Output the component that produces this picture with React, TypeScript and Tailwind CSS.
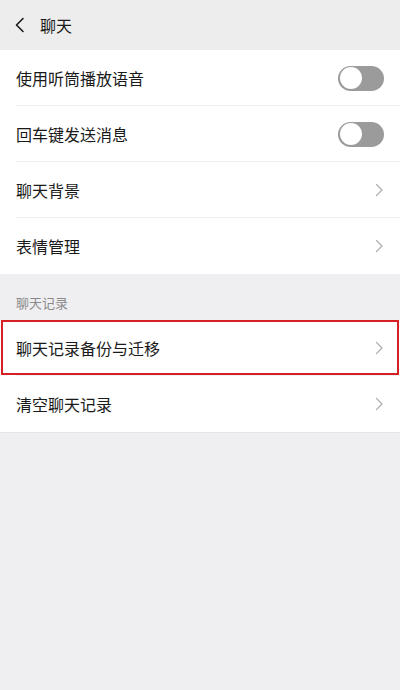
import React from "react";

const font = { fontFamily: '"Noto Sans CJK SC", "Noto Sans", sans-serif' };

function Chevron() {
  return (
    <svg width="9" height="14" viewBox="0 0 9 14" fill="none">
      <path d="M1.5 1.5 L7 7 L1.5 12.5" stroke="#b2b2b2" strokeWidth="1.4" strokeLinecap="round" strokeLinejoin="round" />
    </svg>
  );
}

function Toggle() {
  return (
    <div className="w-[46px] h-[25px] rounded-full bg-[#9b9b9b] flex items-center p-[1.5px]">
      <div className="w-[22px] h-[22px] rounded-full bg-white" />
    </div>
  );
}

function Row({ label, right, divider = true, highlight = false }: { label: string; right: React.ReactNode; divider?: boolean; highlight?: boolean }) {
  return (
    <div className="relative bg-white h-[56px] flex items-center pl-4 pr-4">
      <span className="text-[16px] text-[#1a1a1a] flex-1 leading-none">{label}</span>
      <div className="flex items-center">{right}</div>
      {divider && <div className="absolute left-4 right-0 bottom-0 h-px bg-[#f1f1f1]" />}
      {highlight && <div className="absolute left-[1px] right-[1px] top-0 bottom-[1px] border-2 border-[#d61f26]" />}
    </div>
  );
}

export default function App() {
  return (
    <div className="w-[400px] h-[690px] bg-[#efeef1] flex flex-col" style={font}>
      <div className="h-[50px] bg-[#ededed] flex items-center pl-[14px]">
        <svg width="12" height="16" viewBox="0 0 12 16" fill="none">
          <path d="M9 1.5 L2.5 8 L9 14.5" stroke="#1a1a1a" strokeWidth="1.6" strokeLinecap="round" strokeLinejoin="round" />
        </svg>
        <span className="ml-[14px] text-[16px] text-[#1a1a1a]">聊天</span>
      </div>
      <div className="flex flex-col">
        <Row label="使用听筒播放语音" right={<Toggle />} />
        <Row label="回车键发送消息" right={<Toggle />} />
        <Row label="聊天背景" right={<Chevron />} />
        <Row label="表情管理" right={<Chevron />} divider={false} />
      </div>
      <div className="h-[46px] flex items-center pl-4 pt-[12px]">
        <span className="text-[13px] text-[#8a8a8a]">聊天记录</span>
      </div>
      <div className="flex flex-col">
        <Row label="聊天记录备份与迁移" right={<Chevron />} highlight />
        <Row label="清空聊天记录" right={<Chevron />} divider={false} />
      </div>
      <div className="h-px bg-[#e5e4e8]" />
    </div>
  );
}
